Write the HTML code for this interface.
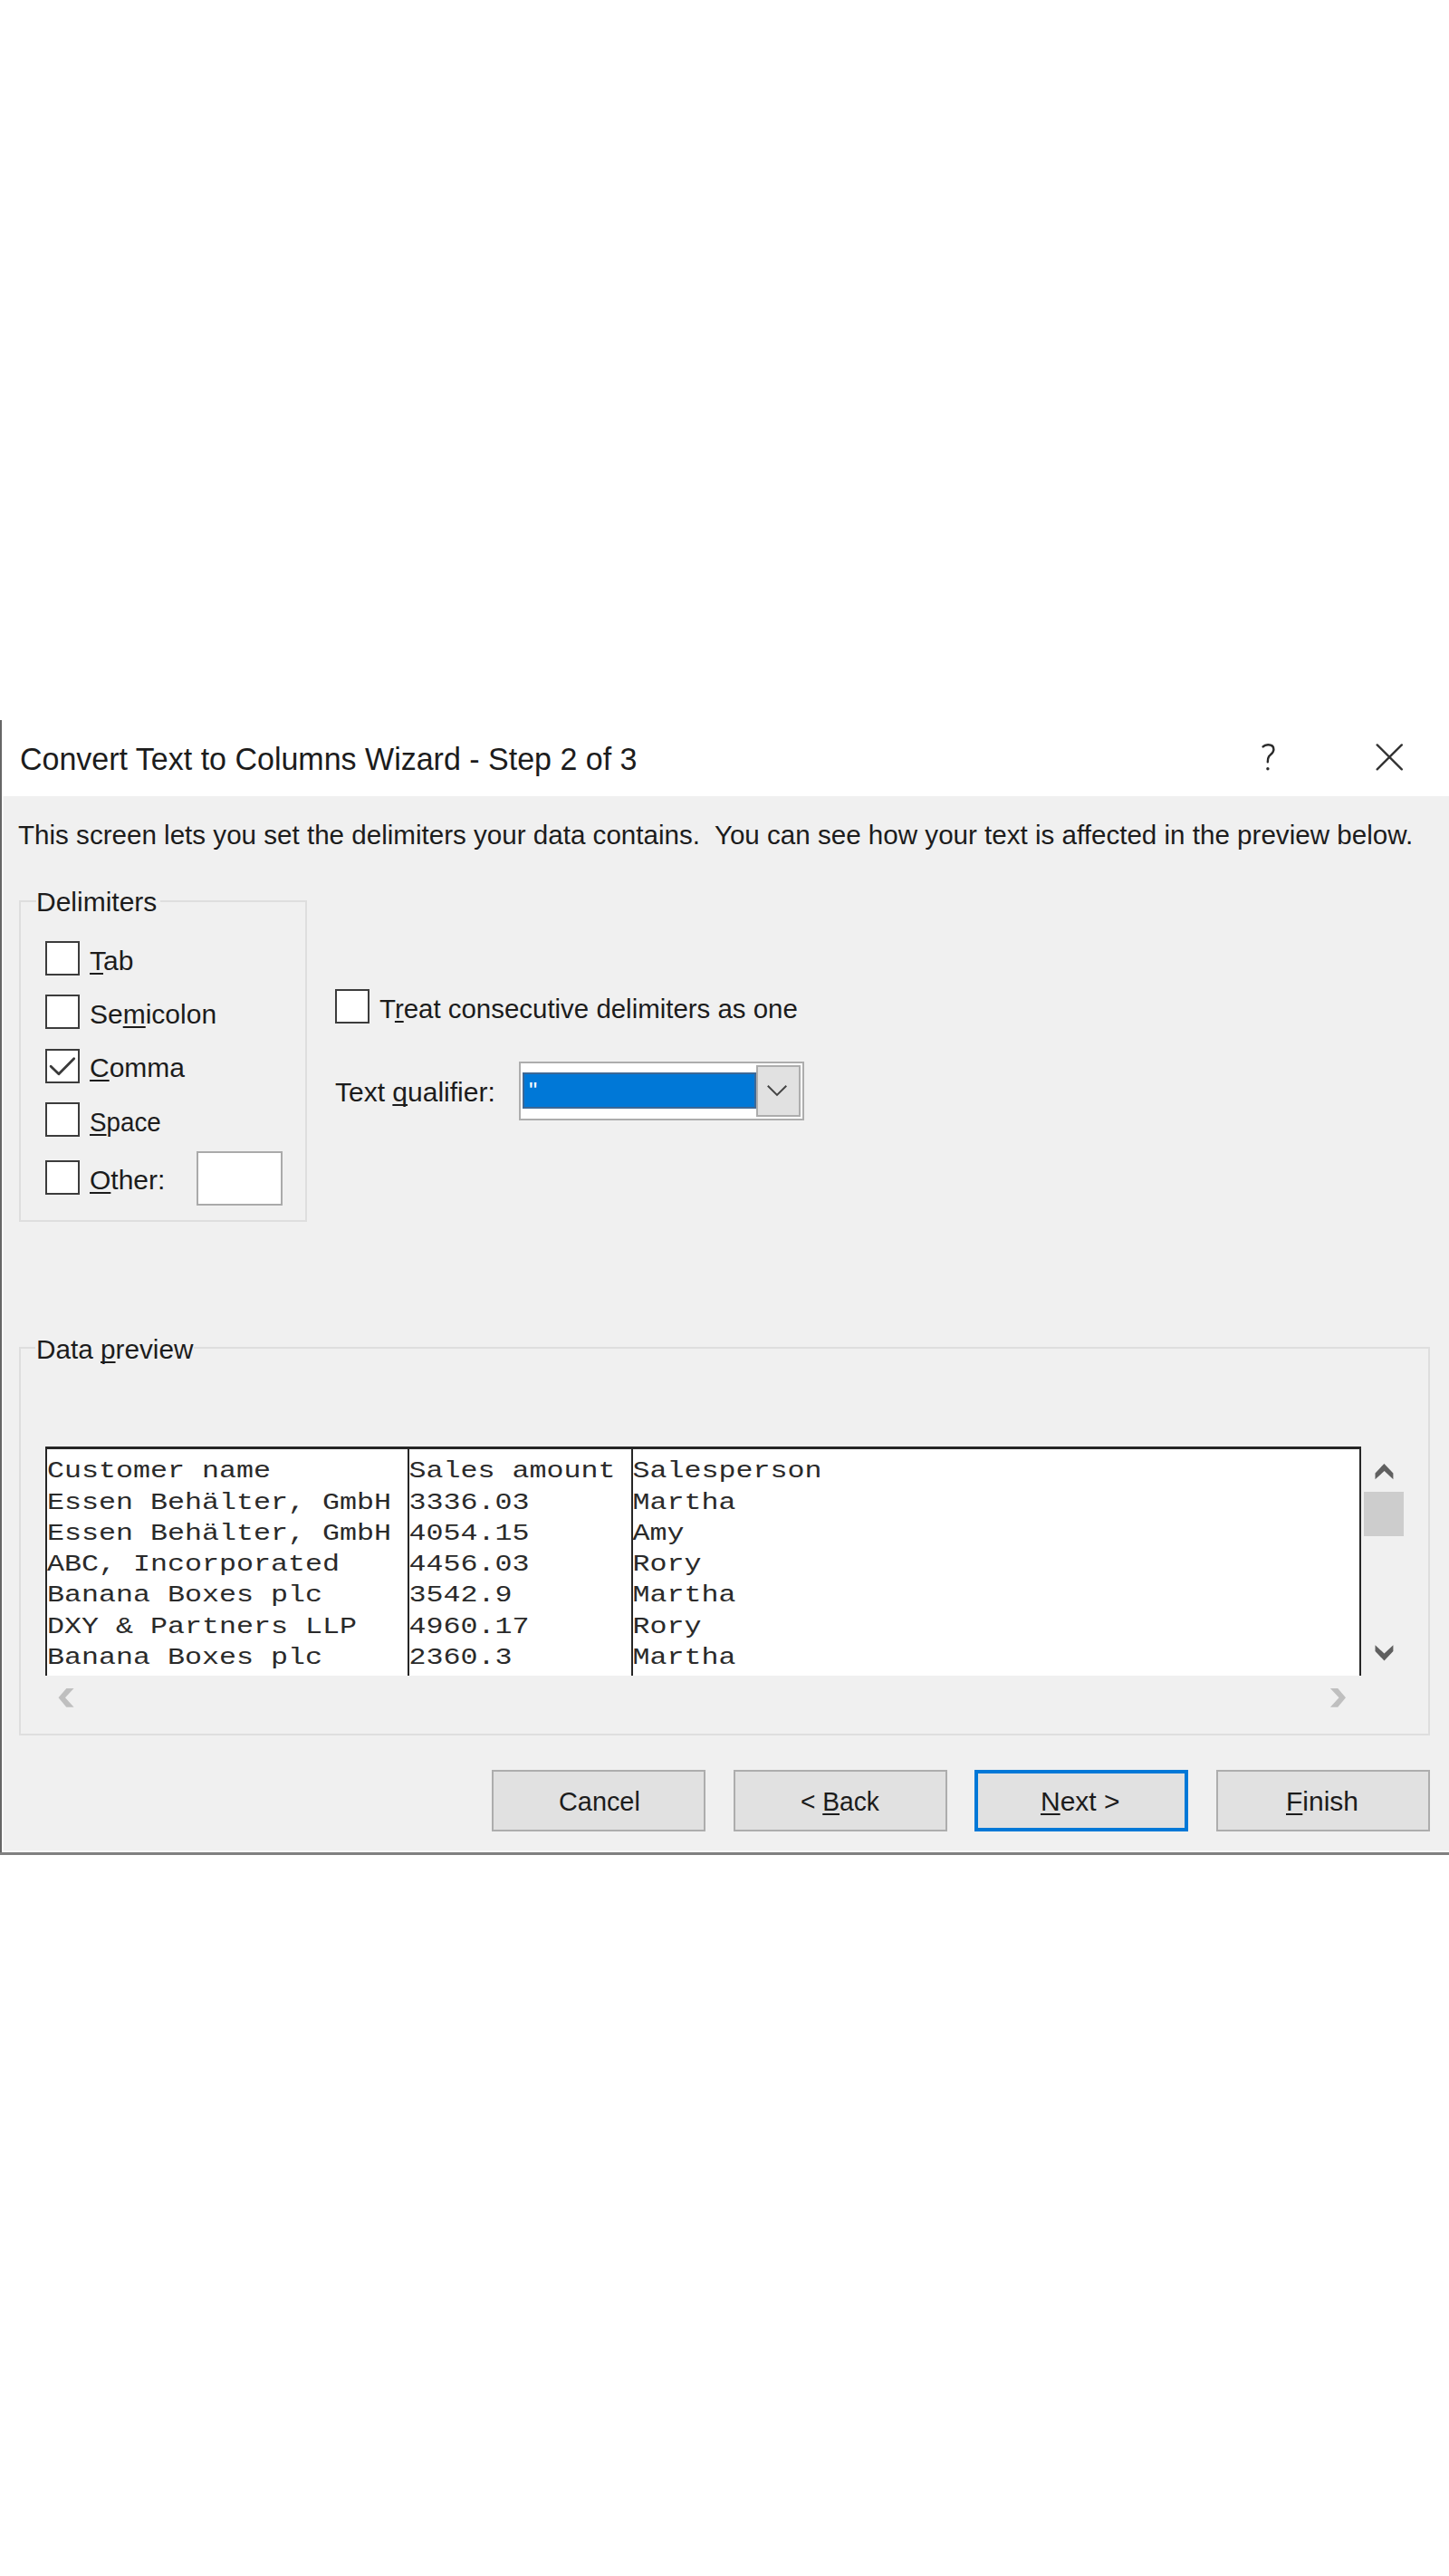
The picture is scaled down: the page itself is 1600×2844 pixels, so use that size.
<!DOCTYPE html>
<html><head><meta charset="utf-8"><style>
html,body{margin:0;padding:0;background:#fff;}
body{width:1600px;height:2844px;position:relative;overflow:hidden;}
body>div,#w>div,#w>svg{position:absolute;}
u{text-decoration:underline;text-decoration-thickness:2px;text-underline-offset:2.5px;text-decoration-skip-ink:none;}
</style></head><body>
<div id="w" style="left:0;top:0;width:1600px;height:2844px;">
<div style="left:0px;top:795px;width:1600px;height:1253px;background:#f0f0f0;"></div>
<div style="left:0px;top:795px;width:1600px;height:84px;background:#ffffff;"></div>
<div style="left:0px;top:795px;width:2px;height:1253px;background:#666666;"></div>
<div style="left:2px;top:879px;width:2px;height:1166px;background:#f8f8f8;"></div>
<div style="left:2px;top:2043px;width:1598px;height:2px;background:#f8f8f8;"></div>
<div style="left:0px;top:2045px;width:1600px;height:3px;background:#808080;"></div>
<div style="left:22.00px;top:820.37px;font:35px/35px 'Liberation Sans', sans-serif;color:#1c1c1c;white-space:pre;transform:scale(0.9713,1.0);transform-origin:0 29.63px;">Convert Text to Columns Wizard - Step 2 of 3</div>
<svg style="left:1390px;top:818px" width="22" height="36" viewBox="0 0 22 36"><path d="M4.6 6.4 C6 4.8, 8 4.2, 10.2 4.2 C14 4.2, 16.4 6.2, 16.4 9.4 C16.4 13, 13.2 14.6, 11.2 17 C10.2 18.4, 9.8 20, 9.8 23.2" stroke="#2a2a2a" stroke-width="2.4" fill="none" stroke-linecap="round"/><circle cx="9.9" cy="30.7" r="1.7" fill="#2a2a2a"/></svg>
<svg style="left:1515px;top:817px" width="38" height="38" viewBox="0 0 38 38"><path d="M5.7 5.4 L32.8 32.3 M32.8 5.4 L5.7 32.3" stroke="#333" stroke-width="2.4" fill="none" stroke-linecap="round"/></svg>
<div style="left:20.00px;top:906.60px;font:30px/30px 'Liberation Sans', sans-serif;color:#1c1c1c;white-space:pre;transform:scale(0.986,1.0);transform-origin:0 25.40px;">This screen lets you set the delimiters your data contains.  You can see how your text is affected in the preview below.</div>
<div style="left:21px;top:993.5px;width:318px;height:355.5px;box-sizing:border-box;border:2px solid #dedede;"></div>
<div style="left:40px;top:980px;width:137px;height:20px;background:#f0f0f0;"></div>
<div style="left:40.00px;top:981.10px;font:30px/30px 'Liberation Sans', sans-serif;color:#1c1c1c;white-space:pre;">Delimiters</div>
<div style="left:49.5px;top:1039px;width:38.5px;height:38px;background:#fff;box-sizing:border-box;border:2px solid #3c3c3c;"></div>
<div style="left:99.00px;top:1046.30px;font:30px/30px 'Liberation Sans', sans-serif;color:#1c1c1c;white-space:pre;"><u>T</u>ab</div>
<div style="left:49.5px;top:1098px;width:38.5px;height:38px;background:#fff;box-sizing:border-box;border:2px solid #3c3c3c;"></div>
<div style="left:99.00px;top:1105.30px;font:30px/30px 'Liberation Sans', sans-serif;color:#1c1c1c;white-space:pre;">Se<u>m</u>icolon</div>
<div style="left:49.5px;top:1157.5px;width:38.5px;height:38.0px;background:#fff;box-sizing:border-box;border:2px solid #3c3c3c;"></div>
<svg style="left:49.5px;top:1157.5px" width="38" height="38" viewBox="0 0 38 38"><path d="M6.1 19.2 L14.9 27.8 L31.7 10.7" stroke="#3a3a3a" stroke-width="2.8" fill="none" stroke-linecap="round" stroke-linejoin="round"/></svg>
<div style="left:99.00px;top:1164.40px;font:30px/30px 'Liberation Sans', sans-serif;color:#1c1c1c;white-space:pre;"><u>C</u>omma</div>
<div style="left:49.5px;top:1216.5px;width:38.5px;height:38.0px;background:#fff;box-sizing:border-box;border:2px solid #3c3c3c;"></div>
<div style="left:99.00px;top:1223.60px;font:30px/30px 'Liberation Sans', sans-serif;color:#1c1c1c;white-space:pre;transform:scale(0.926,1.0);transform-origin:0 25.40px;"><u>S</u>pace</div>
<div style="left:49.5px;top:1281px;width:38.5px;height:38px;background:#fff;box-sizing:border-box;border:2px solid #3c3c3c;"></div>
<div style="left:99.00px;top:1288.20px;font:30px/30px 'Liberation Sans', sans-serif;color:#1c1c1c;white-space:pre;"><u>O</u>ther:</div>
<div style="left:217px;top:1271px;width:95px;height:60px;background:#fff;box-sizing:border-box;border:2px solid #aaaaaa;"></div>
<div style="left:369.5px;top:1092px;width:38.5px;height:38px;background:#fff;box-sizing:border-box;border:2px solid #3c3c3c;"></div>
<div style="left:419.00px;top:1099.20px;font:30px/30px 'Liberation Sans', sans-serif;color:#1c1c1c;white-space:pre;transform:scale(0.981,1.0);transform-origin:0 25.40px;">T<u>r</u>eat consecutive delimiters as one</div>
<div style="left:370.00px;top:1190.60px;font:30px/30px 'Liberation Sans', sans-serif;color:#1c1c1c;white-space:pre;">Text <u>q</u>ualifier:</div>
<div style="left:573px;top:1172px;width:314.5px;height:65px;background:#fff;box-sizing:border-box;border:2px solid #adadad;"></div>
<div style="left:577px;top:1184px;width:258px;height:39.5px;background:#0078d7;box-sizing:border-box;border:2px solid #3d6896;"></div>
<div style="left:584.00px;top:1190.99px;font:26px/26px 'Liberation Sans', sans-serif;color:#fff;white-space:pre;">"</div>
<div style="left:834.5px;top:1176px;width:49.0px;height:57px;background:#e1e1e1;box-sizing:border-box;border:2px solid #adadad;"></div>
<svg style="left:840px;top:1190px" width="36" height="26" viewBox="0 0 36 26"><path d="M7.8 8.7 L18 18.9 L28.3 8.7" stroke="#444" stroke-width="2" fill="none"/></svg>
<div style="left:21px;top:1487px;width:1558px;height:428.5px;box-sizing:border-box;border:2px solid #dedede;"></div>
<div style="left:39px;top:1470px;width:175px;height:30px;background:#f0f0f0;"></div>
<div style="left:40.00px;top:1474.60px;font:30px/30px 'Liberation Sans', sans-serif;color:#1c1c1c;white-space:pre;transform:scale(0.99,1.0);transform-origin:0 25.40px;">Data <u>p</u>review</div>
<div style="left:50px;top:1597px;width:1453px;height:252.5px;background:#fff;"></div>
<div style="left:50px;top:1597px;width:1453px;height:2.5px;background:#262626;"></div>
<div style="left:50px;top:1597px;width:2px;height:252.5px;background:#262626;"></div>
<div style="left:1501px;top:1597px;width:2px;height:252.5px;background:#262626;"></div>
<div style="left:449.5px;top:1597px;width:2.0px;height:252.5px;background:#262626;"></div>
<div style="left:696.5px;top:1597px;width:2.0px;height:252.5px;background:#262626;"></div>
<div style="left:52.00px;top:1608.34px;font:31.67px/31.67px 'Liberation Mono', monospace;color:#2a2a2a;white-space:pre;transform:scale(1.0,0.8);transform-origin:0 24.26px;">Customer name</div>
<div style="left:451.50px;top:1608.34px;font:31.67px/31.67px 'Liberation Mono', monospace;color:#2a2a2a;white-space:pre;transform:scale(1.0,0.8);transform-origin:0 24.26px;">Sales amount</div>
<div style="left:698.50px;top:1608.34px;font:31.67px/31.67px 'Liberation Mono', monospace;color:#2a2a2a;white-space:pre;transform:scale(1.0,0.8);transform-origin:0 24.26px;">Salesperson</div>
<div style="left:52.00px;top:1642.59px;font:31.67px/31.67px 'Liberation Mono', monospace;color:#2a2a2a;white-space:pre;transform:scale(1.0,0.8);transform-origin:0 24.26px;">Essen Behälter, GmbH</div>
<div style="left:451.50px;top:1642.59px;font:31.67px/31.67px 'Liberation Mono', monospace;color:#2a2a2a;white-space:pre;transform:scale(1.0,0.8);transform-origin:0 24.26px;">3336.03</div>
<div style="left:698.50px;top:1642.59px;font:31.67px/31.67px 'Liberation Mono', monospace;color:#2a2a2a;white-space:pre;transform:scale(1.0,0.8);transform-origin:0 24.26px;">Martha</div>
<div style="left:52.00px;top:1676.84px;font:31.67px/31.67px 'Liberation Mono', monospace;color:#2a2a2a;white-space:pre;transform:scale(1.0,0.8);transform-origin:0 24.26px;">Essen Behälter, GmbH</div>
<div style="left:451.50px;top:1676.84px;font:31.67px/31.67px 'Liberation Mono', monospace;color:#2a2a2a;white-space:pre;transform:scale(1.0,0.8);transform-origin:0 24.26px;">4054.15</div>
<div style="left:698.50px;top:1676.84px;font:31.67px/31.67px 'Liberation Mono', monospace;color:#2a2a2a;white-space:pre;transform:scale(1.0,0.8);transform-origin:0 24.26px;">Amy</div>
<div style="left:52.00px;top:1711.09px;font:31.67px/31.67px 'Liberation Mono', monospace;color:#2a2a2a;white-space:pre;transform:scale(1.0,0.8);transform-origin:0 24.26px;">ABC, Incorporated</div>
<div style="left:451.50px;top:1711.09px;font:31.67px/31.67px 'Liberation Mono', monospace;color:#2a2a2a;white-space:pre;transform:scale(1.0,0.8);transform-origin:0 24.26px;">4456.03</div>
<div style="left:698.50px;top:1711.09px;font:31.67px/31.67px 'Liberation Mono', monospace;color:#2a2a2a;white-space:pre;transform:scale(1.0,0.8);transform-origin:0 24.26px;">Rory</div>
<div style="left:52.00px;top:1745.34px;font:31.67px/31.67px 'Liberation Mono', monospace;color:#2a2a2a;white-space:pre;transform:scale(1.0,0.8);transform-origin:0 24.26px;">Banana Boxes plc</div>
<div style="left:451.50px;top:1745.34px;font:31.67px/31.67px 'Liberation Mono', monospace;color:#2a2a2a;white-space:pre;transform:scale(1.0,0.8);transform-origin:0 24.26px;">3542.9</div>
<div style="left:698.50px;top:1745.34px;font:31.67px/31.67px 'Liberation Mono', monospace;color:#2a2a2a;white-space:pre;transform:scale(1.0,0.8);transform-origin:0 24.26px;">Martha</div>
<div style="left:52.00px;top:1779.59px;font:31.67px/31.67px 'Liberation Mono', monospace;color:#2a2a2a;white-space:pre;transform:scale(1.0,0.8);transform-origin:0 24.26px;">DXY &amp; Partners LLP</div>
<div style="left:451.50px;top:1779.59px;font:31.67px/31.67px 'Liberation Mono', monospace;color:#2a2a2a;white-space:pre;transform:scale(1.0,0.8);transform-origin:0 24.26px;">4960.17</div>
<div style="left:698.50px;top:1779.59px;font:31.67px/31.67px 'Liberation Mono', monospace;color:#2a2a2a;white-space:pre;transform:scale(1.0,0.8);transform-origin:0 24.26px;">Rory</div>
<div style="left:52.00px;top:1813.84px;font:31.67px/31.67px 'Liberation Mono', monospace;color:#2a2a2a;white-space:pre;transform:scale(1.0,0.8);transform-origin:0 24.26px;">Banana Boxes plc</div>
<div style="left:451.50px;top:1813.84px;font:31.67px/31.67px 'Liberation Mono', monospace;color:#2a2a2a;white-space:pre;transform:scale(1.0,0.8);transform-origin:0 24.26px;">2360.3</div>
<div style="left:698.50px;top:1813.84px;font:31.67px/31.67px 'Liberation Mono', monospace;color:#2a2a2a;white-space:pre;transform:scale(1.0,0.8);transform-origin:0 24.26px;">Martha</div>
<svg style="left:0;top:0" width="1600" height="2000" viewBox="0 0 1600 2000"><polygon points="1528.4,1615.9 1538.4,1626.4 1538.4,1633.3 1528.6,1624 1518.5,1633.3 1518.5,1626.4" fill="#606060"/><polygon points="1528.5,1833.5 1538.4,1823 1538.4,1816.2 1528.5,1825.5 1518.5,1816.2 1518.5,1823" fill="#606060"/><polygon points="64.5,1874.3 73.3,1864.1 81.6,1864.1 72,1874.3 81.6,1884.8 73.3,1884.8" fill="#bfbfbf"/><polygon points="1486,1874.3 1477.2,1864.1 1468.9,1864.1 1478.5,1874.3 1468.9,1884.8 1477.2,1884.8" fill="#bfbfbf"/></svg>
<div style="left:1505.5px;top:1647px;width:44.5px;height:48.5px;background:#cdcdcd;"></div>
<div style="left:543px;top:1953.5px;width:236px;height:68.5px;background:#e1e1e1;box-sizing:border-box;border:2px solid #adadad;"></div>
<div style="left:810px;top:1953.5px;width:235.5px;height:68.5px;background:#e1e1e1;box-sizing:border-box;border:2px solid #adadad;"></div>
<div style="left:1076px;top:1953.5px;width:236px;height:68.5px;background:#e1e1e1;box-sizing:border-box;border:4px solid #0078d7;"></div>
<div style="left:1343px;top:1953.5px;width:236px;height:68.5px;background:#e1e1e1;box-sizing:border-box;border:2px solid #adadad;"></div>
<div style="left:617.00px;top:1974.10px;font:30px/30px 'Liberation Sans', sans-serif;color:#1c1c1c;white-space:pre;transform:scale(0.962,1.0);transform-origin:0 25.40px;">Cancel</div>
<div style="left:884.00px;top:1974.10px;font:30px/30px 'Liberation Sans', sans-serif;color:#1c1c1c;white-space:pre;transform:scale(0.938,1.0);transform-origin:0 25.40px;">&lt; <u>B</u>ack</div>
<div style="left:1149.00px;top:1974.10px;font:30px/30px 'Liberation Sans', sans-serif;color:#1c1c1c;white-space:pre;"><u>N</u>ext &gt;</div>
<div style="left:1420.00px;top:1974.10px;font:30px/30px 'Liberation Sans', sans-serif;color:#1c1c1c;white-space:pre;"><u>F</u>inish</div>
</div></body></html>
